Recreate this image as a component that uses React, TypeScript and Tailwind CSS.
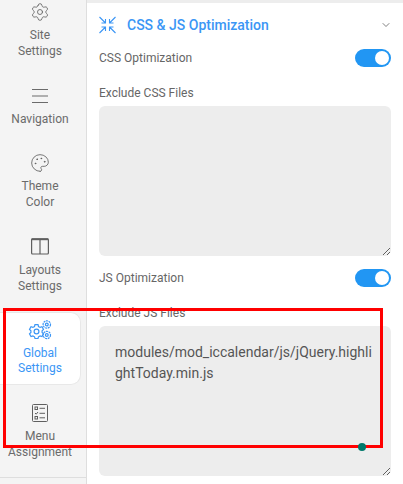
import { ChevronDown, Palette, Settings } from "lucide-react";
import type { ReactNode } from "react";

function LinesIcon() {
  return (
    <svg width="18" height="16" viewBox="0 0 18 16" fill="none" stroke="#6b6b6b" strokeWidth="1">
      <path d="M1 1.500h16M1 8h16M1 14.500h16" />
    </svg>
  );
}

function LayoutIcon() {
  return (
    <svg width="18" height="17" viewBox="0 0 18 17" fill="none" stroke="#5f5f5f" strokeWidth="1.200">
      <rect x="0.600" y="1" width="16.800" height="15" rx="1" />
      <path d="M0.600 1.200h16.800" strokeWidth="2" />
      <path d="M9 1v15" />
    </svg>
  );
}

function GlobalIcon() {
  return (
    <svg width="24" height="20" viewBox="0 0 24 20" fill="none" stroke="#3b96f5" strokeWidth="1.200">
      <path d="M7 4.600h3l.5 1.900 1.600.9 1.900-.6 1.500 2.600-1.400 1.400v1.700l1.400 1.400-1.500 2.600-1.900-.6-1.600.9-.5 1.700H7l-.5-1.700-1.600-.9-1.900.6-1.500-2.600 1.400-1.400V10.800l-1.400-1.400 1.500-2.600 1.900.6 1.600-.9z" />
      <circle cx="8.500" cy="11.500" r="2.400" />
      <circle cx="18.800" cy="4.500" r="3.700" strokeDasharray="2 0.700" />
      <circle cx="18.800" cy="4.500" r="1.400" />
      <circle cx="18.800" cy="15" r="3.700" strokeDasharray="2 0.700" />
      <circle cx="18.800" cy="15" r="1.400" />
    </svg>
  );
}

function ChecklistIcon() {
  return (
    <svg width="16" height="18" viewBox="0 0 16 18" fill="none" stroke="#5f5f5f" strokeWidth="1">
      <rect x="0.500" y="0.500" width="15" height="17" rx="1" />
      <rect x="3" y="3" width="2.500" height="2.500" />
      <path d="M7.500 4.300h5.500M3 9l1.200 1.200L6 8M7.500 9.300h5.500" />
      <rect x="3" y="12.500" width="2.500" height="2.500" />
      <path d="M7.500 13.800h5.500" />
    </svg>
  );
}

function CompressIcon() {
  return (
    <svg width="17" height="18" viewBox="0 0 17 18" fill="none" stroke="#3b96f5" strokeWidth="1.100">
      <path d="M0.500 1l6 6M6.500 3v4h-4M16.500 1l-6 6M10.500 3v4h4M0.500 17l6-6M6.500 15v-4h-4M16.500 17l-6-6M10.500 15v-4h4" />
    </svg>
  );
}

function NavItem({
  icon,
  label,
  active,
  gap = "mb-[10.500px]",
}: {
  icon: ReactNode;
  label: ReactNode;
  active?: boolean;
  gap?: string;
}) {
  return (
    <div
      className={`flex flex-col items-center text-center w-[81px] pt-[7px] pb-[7px] rounded-r-[10px] border border-l-0 text-[12px] leading-[15.600px] ${gap} ${
        active ? "bg-white text-[#3b96f5] border-[#e8e8e8]" : "text-[#6b6b6b] border-transparent"
      }`}
    >
      <div className="h-[20px] flex items-center justify-center mb-[6px]">{icon}</div>
      {label}
    </div>
  );
}

function Toggle() {
  return (
    <div className="w-[36px] h-[18px] rounded-full bg-[#2196f3] flex items-center justify-end pr-[2px]">
      <div className="w-[14px] h-[14px] rounded-full bg-white" />
    </div>
  );
}

function ToggleRow({ label }: { label: string }) {
  return (
    <div className="flex items-center justify-between h-[18px] text-[12px] text-[#666]">
      {label}
      <Toggle />
    </div>
  );
}

export default function App() {
  return (
    <div
      className="relative w-[403px] h-[484px] overflow-hidden flex bg-white"
      style={{ fontFamily: "Roboto, sans-serif" }}
    >
      <aside className="w-[87px] shrink-0 h-full bg-[#f4f4f4] border-r border-[#dedede]">
        <div className="h-[478px] border-b border-[#dedede] overflow-hidden">
          <div className="-mt-[6px]">
            <NavItem icon={<Settings size={20} strokeWidth={1} color="#5f5f5f" />} label={<>Site<br />Settings</>} />
            <NavItem gap="mb-[10px]" icon={<LinesIcon />} label="Navigation" />
            <NavItem icon={<Palette size={20} strokeWidth={1} color="#5f5f5f" />} label={<>Theme<br />Color</>} />
            <NavItem gap="mb-[9.500px]" icon={<LayoutIcon />} label={<>Layouts<br />Settings</>} />
            <NavItem active icon={<GlobalIcon />} label={<>Global<br />Settings</>} />
            <NavItem icon={<ChecklistIcon />} label={<>Menu<br />Assignment</>} />
          </div>
        </div>
      </aside>

      <main className="flex-1 border-t-[3px] border-[#ededed] pl-[12px] pr-[12px]">
        <div className="flex items-center h-[18px] mt-[13px]">
          <CompressIcon />
          <h2 className="ml-[11px] text-[14px] font-medium text-[#3b96f5]">CSS &amp; JS Optimization</h2>
          <ChevronDown size={12} strokeWidth={1.500} color="#555" className="ml-auto mr-[-1px]" />
        </div>

        <div className="mt-[15px]">
          <ToggleRow label="CSS Optimization" />
        </div>
        <div className="mt-[19px] text-[12px] leading-[15px] text-[#666]">Exclude CSS Files</div>
        <textarea
          readOnly
          className="block mt-[5px] w-[292px] h-[150px] rounded-[6px] bg-[#ededed] outline-none"
        />

        <div className="mt-[13px]">
          <ToggleRow label="JS Optimization" />
        </div>
        <div className="mt-[19px] text-[12px] leading-[15px] text-[#666]">Exclude JS Files</div>
        <textarea
          readOnly
          defaultValue="modules/mod_iccalendar/js/jQuery.highlightToday.min.js"
          className="block mt-[5px] w-[292px] h-[150px] rounded-[6px] bg-[#ededed] outline-none pl-[16px] pr-[16px] pt-[16px] text-[14px] leading-[21px] text-[#555] break-all"
        />
      </main>

      {/* annotation drawn over the screenshot */}
      <div className="absolute left-[3px] top-[308px] w-[380px] h-[140px] border-[3px] border-[#ff0000] pointer-events-none" />
      <div className="absolute left-[358px] top-[443px] w-[8px] h-[8px] rounded-full bg-[#00796b]" />
    </div>
  );
}
